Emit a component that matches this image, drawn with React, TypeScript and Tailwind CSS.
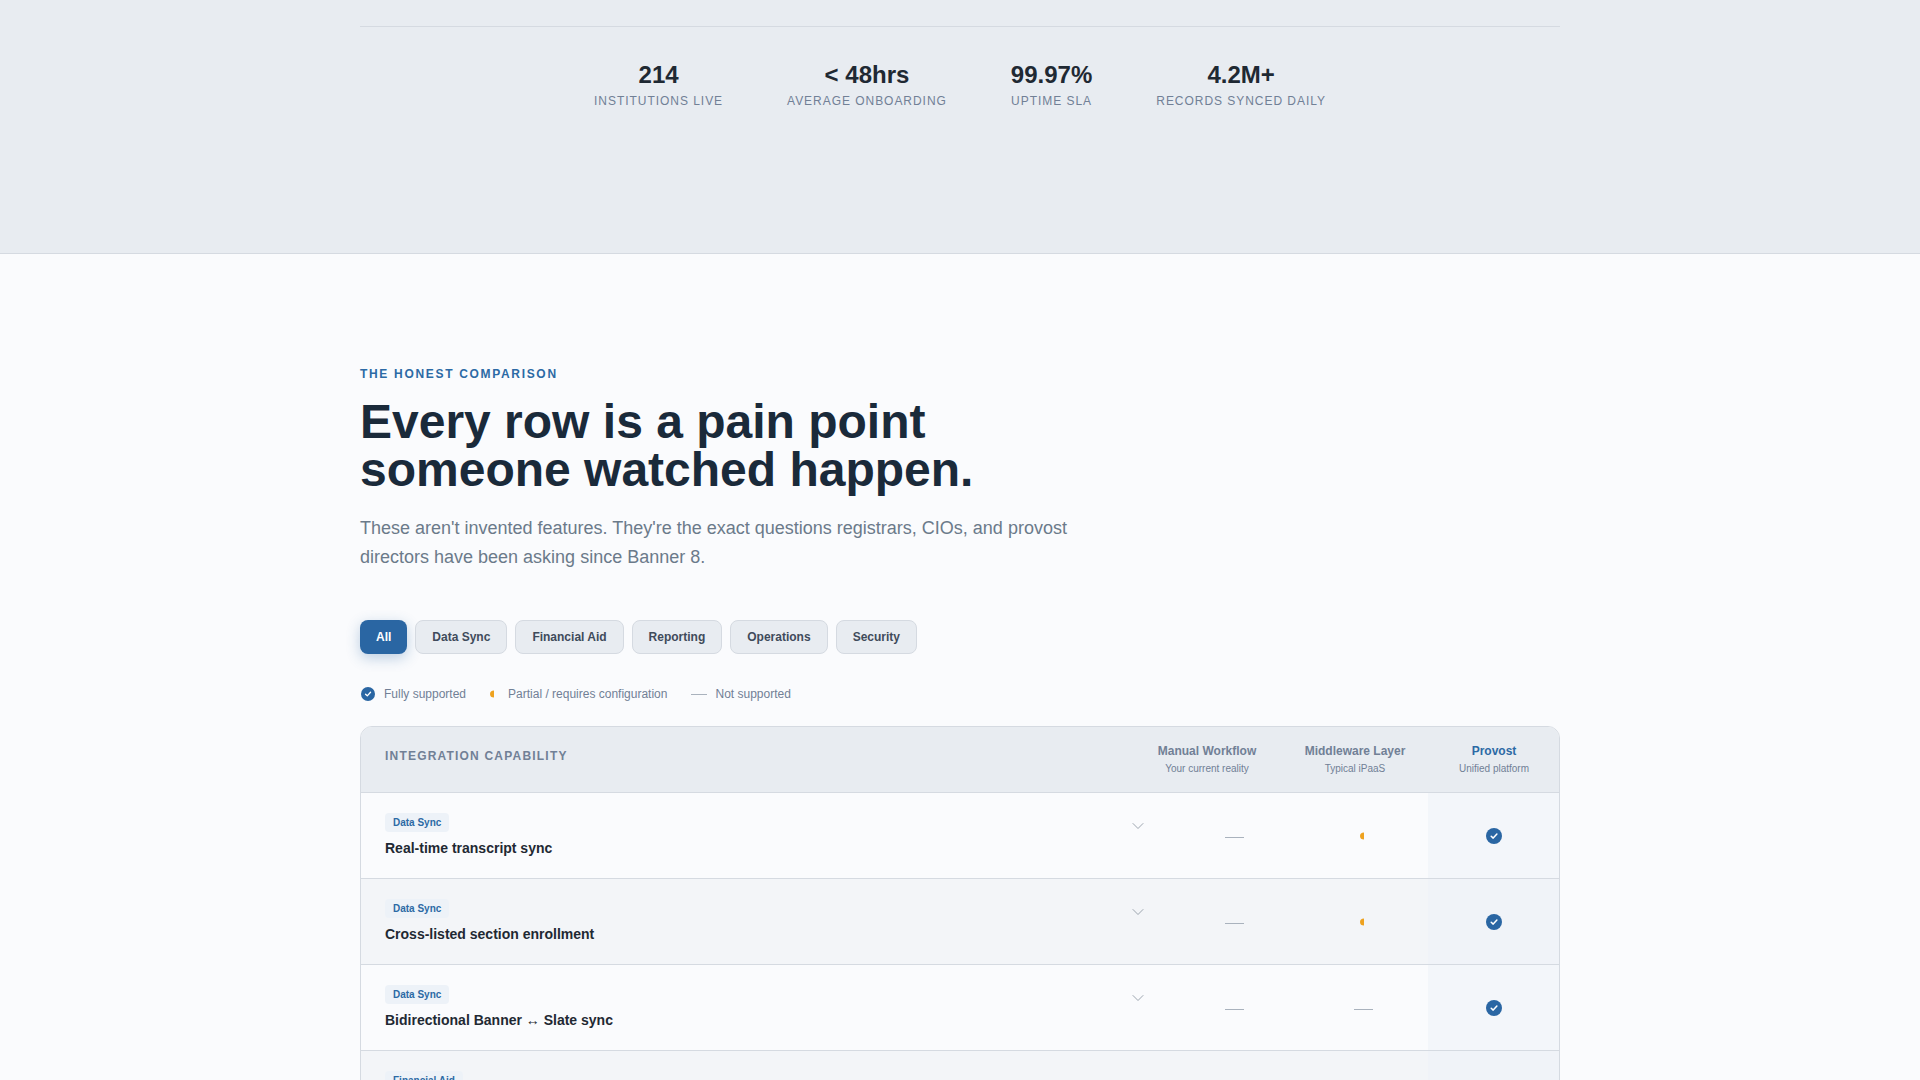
import { ChevronDown } from "lucide-react";

const FONT = "font-['Liberation_Sans',Arial,sans-serif]";

const STATS = [
  { value: "214", label: "Institutions live" },
  { value: "< 48hrs", label: "Average onboarding" },
  { value: "99.97%", label: "Uptime SLA" },
  { value: "4.2M+", label: "Records synced daily" },
];

const FILTERS = ["All", "Data Sync", "Financial Aid", "Reporting", "Operations", "Security"];

type Level = "full" | "partial" | "none";

const ROWS: { tag: string; name: string; manual: Level; middleware: Level }[] = [
  { tag: "Data Sync", name: "Real-time transcript sync", manual: "none", middleware: "partial" },
  { tag: "Data Sync", name: "Cross-listed section enrollment", manual: "none", middleware: "partial" },
  { tag: "Data Sync", name: "Bidirectional Banner ↔ Slate sync", manual: "none", middleware: "none" },
  { tag: "Financial Aid", name: "FAFSA status reconciliation", manual: "none", middleware: "none" },
];

const GRID = "grid grid-cols-[1fr_130px_129px_131px]";

function Check({ size }: { size: number }) {
  return (
    <svg width={size} height={size} viewBox="0 0 16 16" className="shrink-0">
      <circle cx="8" cy="8" r="8" fill="#2a66a3" />
      <path d="M5.2 8.2 7.2 10.1 10.9 6" fill="none" stroke="#fff" strokeWidth="1.5" strokeLinecap="round" strokeLinejoin="round" />
    </svg>
  );
}

function Partial({ className = "" }: { className?: string }) {
  return (
    <svg width="14" height="14" viewBox="0 0 14 14" className={`shrink-0 ${className}`}>
      <path d="M7 3.4A4 3.6 0 0 0 7 10.6Z" fill="#eea21f" />
    </svg>
  );
}

function Mark({ level }: { level: Level }) {
  if (level === "full") return <Check size={16} />;
  if (level === "partial") return <Partial />;
  return <span className="mt-[3px] block h-px w-[19px] bg-[#a9b2bd]" />;
}

export default function App() {
  return (
    <div className={`${FONT} h-[1080px] overflow-hidden bg-[#fafbfd] text-[#1f2933]`}>
      {/* Stats band */}
      <div className="h-[254px] border-b border-[#d5dae1] bg-[#e8ecf1] pt-[26px]">
        <div className="mx-auto w-[1200px] border-t border-[#d5dae1] pt-[30px]">
          <div className="flex justify-center gap-16">
            {STATS.map((s) => (
              <div key={s.label} className="flex flex-col items-center">
                <span className="text-2xl leading-[35px] font-bold">{s.value}</span>
                <span className="text-xs leading-[18px] tracking-[0.08em] text-[#718096] uppercase">{s.label}</span>
              </div>
            ))}
          </div>
        </div>
      </div>

      <div className="mx-auto w-[1200px] pt-[111px]">
        <p className="text-xs leading-[18px] font-bold tracking-[0.14em] text-[#2c6aa5] uppercase">The honest comparison</p>
        <h1 className="mt-[15px] text-[48px] leading-[48px] font-bold text-[#1a2a3a]">
          Every row is a pain point
          <br />
          someone watched happen.
        </h1>
        <p className="mt-5 w-[720px] text-lg leading-[29px] text-[#6b7a8a]">
          These aren't invented features. They're the exact questions registrars, CIOs, and provost directors have been asking since Banner 8.
        </p>

        {/* Filters */}
        <div className="mt-[48px] flex gap-2">
          {FILTERS.map((f, i) => (
            <button
              key={f}
              className={
                i === 0
                  ? "h-[34px] rounded-lg bg-[#2a66a3] px-4 text-xs font-bold text-white shadow-[0_4px_14px_rgba(42,102,163,0.3)]"
                  : "h-[34px] rounded-lg border border-[#d5dae1] bg-[#e8ecf1] px-4 text-xs font-bold text-[#3f4b5b]"
              }
            >
              {f}
            </button>
          ))}
        </div>

        {/* Legend */}
        <div className="mt-[31px] flex h-[18px] items-center gap-6 text-xs text-[#718096]">
          <span className="ml-px flex items-center gap-[9px]">
            <Check size={14} />
            Fully supported
          </span>
          <span className="flex items-center gap-[7px]">
            <Partial className="-ml-[3px]" />
            Partial / requires configuration
          </span>
          <span className="flex items-center gap-2">
            <span className="block h-px w-4 bg-[#a9b2bd]" />
            Not supported
          </span>
        </div>

        {/* Comparison table */}
        <div className="mt-[23px] overflow-hidden rounded-t-xl border border-[#d5dae1]">
          <div className="grid h-[66px] grid-cols-[1fr_148px_148px_130px] border-b border-[#d5dae1] bg-[#e8ecf1]">
            <div className="pt-[20px] pl-6 text-xs leading-[18px] font-bold tracking-[0.1em] text-[#718096] uppercase">
              Integration capability
            </div>
            <div className="flex flex-col items-center pt-[15px]">
              <span className="text-xs leading-[18px] font-bold text-[#718096]">Manual Workflow</span>
              <span className="text-[10px] leading-[17px] text-[#718096]">Your current reality</span>
            </div>
            <div className="flex flex-col items-center pt-[15px]">
              <span className="text-xs leading-[18px] font-bold text-[#718096]">Middleware Layer</span>
              <span className="text-[10px] leading-[17px] text-[#718096]">Typical iPaaS</span>
            </div>
            <div className="flex flex-col items-center pt-[15px]">
              <span className="text-xs leading-[18px] font-bold text-[#2c6aa5]">Provost</span>
              <span className="text-[10px] leading-[17px] text-[#718096]">Unified platform</span>
            </div>
          </div>

          {ROWS.map((r, i) => (
            <div key={r.name} className={`${GRID} h-[86px] border-b border-[#d5dae1] ${i % 2 === 1 ? "bg-[#f3f5f8]" : "bg-[#fafbfd]"}`}>
              <div className="flex items-start justify-between pt-5 pr-[21px] pl-6">
                <div>
                  <span className="block w-fit rounded bg-[#edf2f8] px-2 text-[10px] leading-[19px] font-bold text-[#2c6aa5]">{r.tag}</span>
                  <div className="mt-[6px] text-sm leading-[20px] font-bold">{r.name}</div>
                </div>
                <ChevronDown size={20} strokeWidth={1} className="mt-[3px] text-[#8a94a0]" />
              </div>
              <div className="flex items-center justify-center">
                <Mark level={r.manual} />
              </div>
              <div className="flex items-center justify-center">
                <Mark level={r.middleware} />
              </div>
              <div className={`flex items-center justify-center ${i % 2 === 1 ? "bg-[#f0f3f8]" : "bg-[#f3f6fa]"}`}>
                <Check size={16} />
              </div>
            </div>
          ))}
        </div>
      </div>
    </div>
  );
}
